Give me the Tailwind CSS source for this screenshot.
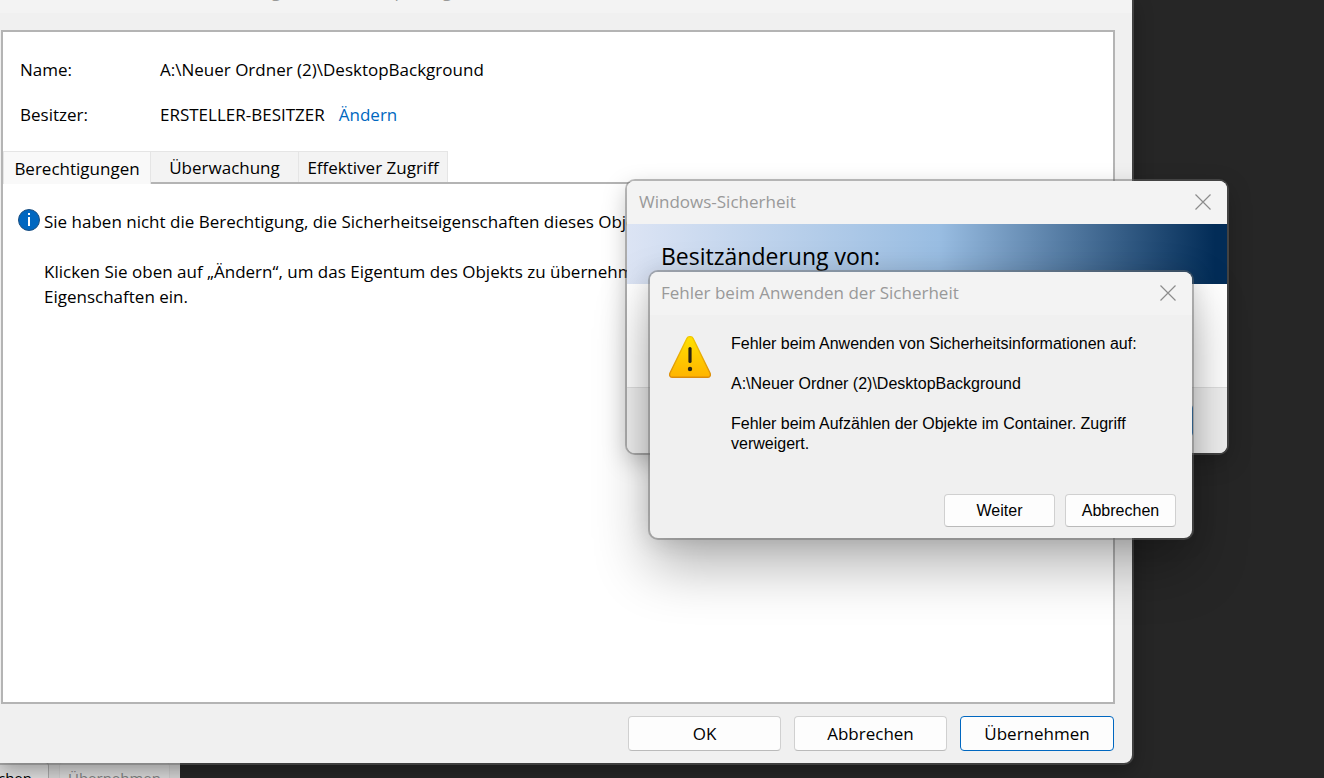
<!DOCTYPE html>
<html lang="de">
<head>
    <meta charset="UTF-8">
    <meta name="viewport" content="width=device-width, initial-scale=1.0">
    <title>Erweiterte Sicherheitseinstellungen</title>
    <script src="https://cdn.jsdelivr.net/npm/@tailwindcss/browser@4"></script>
</head>
<body class="bg-[#262626]">
    <div class="relative h-screen overflow-hidden font-['Open_Sans','Noto_Sans',sans-serif] text-[17px] leading-[25px] text-black">

        <!-- Properties window at the back -->
        <div class="absolute left-0 -bottom-[20px] w-[180px] h-[60px] bg-[#d4d4d4] flex items-end gap-[10px] pb-1 text-[15px]">
            <button class="w-[49px] h-[32px] rounded-r-sm border border-l-0 border-[#a8a8a8] bg-[#dedede] overflow-hidden flex justify-end items-center pr-4">Abbrechen</button>
            <button class="w-[111px] h-[32px] rounded-sm border border-[#cccccc] bg-[#d8d8d8] text-[#808080]" disabled>Übernehmen</button>
        </div>

        <!-- Advanced security settings -->
        <main class="absolute left-0 top-0 right-[192px] bottom-[15px] flex flex-col rounded-br-lg bg-[#f0f0f0] shadow-[0_0_0_2px_rgba(107,107,107,0.45),0_6px_20px_rgba(0,0,0,0.35)]">
            <header class="h-[13px] shrink-0 bg-[#f3f3f3]">
                <h1 class="-mt-[22px] pl-[21px] h-[25px] text-[#999999] whitespace-nowrap">Erweiterte Sicherheitseinstellungen für "DesktopBackground"</h1>
            </header>

            <section class="mt-[17px] ml-[1px] mr-[17px] grow border-2 border-[#b4b4b4] bg-white">
                <dl class="grid grid-cols-[140px_1fr] gap-y-5 pl-[17px] pt-[25px]">
                    <dt>Name:</dt>
                    <dd>A:\Neuer Ordner (2)\DesktopBackground</dd>
                    <dt>Besitzer:</dt>
                    <dd class="flex gap-[14px]">ERSTELLER-BESITZER <a href="#" class="text-[#0067c0]">Ändern</a></dd>
                </dl>

                <nav class="mt-[24px] flex h-[33px]">
                    <button class="w-[148px] border border-b-0 border-[#e5e5e5] bg-[#f9f9f9]">Berechtigungen</button>
                    <div class="flex grow border-b-2 border-[#b4b4b4]">
                        <button class="w-[148px] border-t border-r border-[#e5e5e5] bg-[#f3f3f3]">Überwachung</button>
                        <button class="w-[149px] border-t border-r border-[#e5e5e5] bg-[#f3f3f3]">Effektiver Zugriff</button>
                    </div>
                </nav>

                <div class="flex gap-[4px] pl-[15px] pt-[25px] whitespace-nowrap">
                    <svg class="w-[22px] h-[22px] shrink-0" viewBox="0 0 22 22">
                        <circle cx="11" cy="11" r="10.5" fill="#0067c0" stroke="#1c4f80"/>
                        <rect x="10" y="8" width="2" height="9" fill="#fff"/>
                        <rect x="10" y="4" width="2" height="2" fill="#fff"/>
                    </svg>
                    <div>
                        <p>Sie haben nicht die Berechtigung, die Sicherheitseigenschaften dieses Objekts anzuzeigen.</p>
                        <p class="mt-[25px]">Klicken Sie oben auf „Ändern“, um das Eigentum des Objekts zu übernehmen.<br>Eigenschaften ein.</p>
                    </div>
                </div>
            </section>

            <footer class="flex justify-end gap-[13px] pt-3 pb-3 pr-[18px]">
                <button class="w-[153px] h-[35px] rounded border border-[#d0d0d0] border-b-[#bababa] bg-[#fdfdfd]">OK</button>
                <button class="w-[153px] h-[35px] rounded border border-[#d0d0d0] border-b-[#bababa] bg-[#fdfdfd]">Abbrechen</button>
                <button class="w-[154px] h-[35px] rounded border border-[#0067c0] bg-[#fdfdfd]">Übernehmen</button>
            </footer>
        </main>

        <!-- Windows-Sicherheit -->
        <div role="dialog" aria-labelledby="ownerTitle" class="absolute left-[627px] top-[181px] w-[600px] rounded-lg bg-white shadow-[0_0_0_2px_rgba(107,107,107,0.45),0_8px_24px_rgba(0,0,0,0.25)]">
            <header class="flex h-[43px] items-center justify-between rounded-t-lg bg-[#f3f3f3] pb-[2px] pl-3 pr-4 text-[#999999]">
                <h2 id="ownerTitle">Windows-Sicherheit</h2>
                <button aria-label="Schließen">
                    <svg class="w-4 h-4" viewBox="0 0 16 16" fill="none" stroke="#8c8c8c" stroke-width="1.2"><path d="M.5 .5l15 15M15.500 .5l-15 15"/></svg>
                </button>
            </header>
            <div class="h-[60px] pl-[34px] pt-4 text-[23px] leading-[32px] bg-[linear-gradient(90deg,#dce4f4_0%,#99bde2_52%,#022c57_98%)]">Besitzänderung von:</div>
            <div class="h-[103px]"></div>
            <footer class="flex h-[66px] justify-end rounded-b-lg border-t border-[#dfdfdf] bg-[#f0f0f0] pt-4 pr-[34px]">
                <button class="w-[111px] h-[33px] rounded border border-[#0067c0] bg-[#fdfdfd]">OK</button>
            </footer>
        </div>

        <!-- Error message -->
        <div role="alertdialog" aria-labelledby="errorTitle" class="absolute left-[650px] top-[272px] w-[542px] rounded-lg bg-[#f0f0f0] shadow-[0_0_0_2px_rgba(107,107,107,0.45),0_28px_56px_rgba(0,0,0,0.3),0_2px_24px_rgba(0,0,0,0.14)]">
            <header class="flex h-[43px] items-center justify-between rounded-t-lg bg-[#f3f3f3] pb-[2px] pl-[11px] pr-4 text-[#999999]">
                <h2 id="errorTitle">Fehler beim Anwenden der Sicherheit</h2>
                <button aria-label="Schließen">
                    <svg class="w-4 h-4" viewBox="0 0 16 16" fill="none" stroke="#8c8c8c" stroke-width="1.2"><path d="M.5 .5l15 15M15.500 .5l-15 15"/></svg>
                </button>
            </header>
            <div class="flex gap-5 px-[19px] pt-[19px] font-['Liberation_Sans',Arial,sans-serif] text-[16px] leading-[20px]">
                <svg class="mt-[2px] w-[42px] h-[42px] shrink-0" viewBox="0 0 42 42">
                    <defs>
                        <linearGradient id="warn" x1="0" y1="0" x2="0" y2="1">
                            <stop offset="0" stop-color="#ffe100"/>
                            <stop offset="1" stop-color="#ffb400"/>
                        </linearGradient>
                        <linearGradient id="warnEdge" x1="0" y1="0" x2="0" y2="1">
                            <stop offset="0" stop-color="#f2c800"/>
                            <stop offset="1" stop-color="#dc8c0a"/>
                        </linearGradient>
                    </defs>
                    <path d="M18 2.300C19.300 .1 22.700 .1 24 2.300L41 37C42 39.500 40.800 41.300 38.500 41.300H3.500C1.200 41.300 0 39.500 1 37Z" fill="url(#warn)" stroke="url(#warnEdge)" stroke-width="1.400"/>
                    <path d="M21 12.500V25.500" stroke="#2a2414" stroke-width="3.200" stroke-linecap="round"/>
                    <circle cx="21" cy="33" r="2.200" fill="#2a2414"/>
                </svg>
                <div class="space-y-5">
                    <p>Fehler beim Anwenden von Sicherheitsinformationen auf:</p>
                    <p>A:\Neuer Ordner (2)\DesktopBackground</p>
                    <p>Fehler beim Aufzählen der Objekte im Container. Zugriff verweigert.</p>
                </div>
            </div>
            <footer class="flex justify-end gap-[10px] pt-10 pb-[11px] pr-4 font-['Liberation_Sans',Arial,sans-serif] text-[16px]">
                <button class="w-[111px] h-[33px] rounded border border-[#d0d0d0] border-b-[#bababa] bg-[#fdfdfd]">Weiter</button>
                <button class="w-[111px] h-[33px] rounded border border-[#d0d0d0] border-b-[#bababa] bg-[#fdfdfd]">Abbrechen</button>
            </footer>
        </div>
    </div>
</body>
</html>
